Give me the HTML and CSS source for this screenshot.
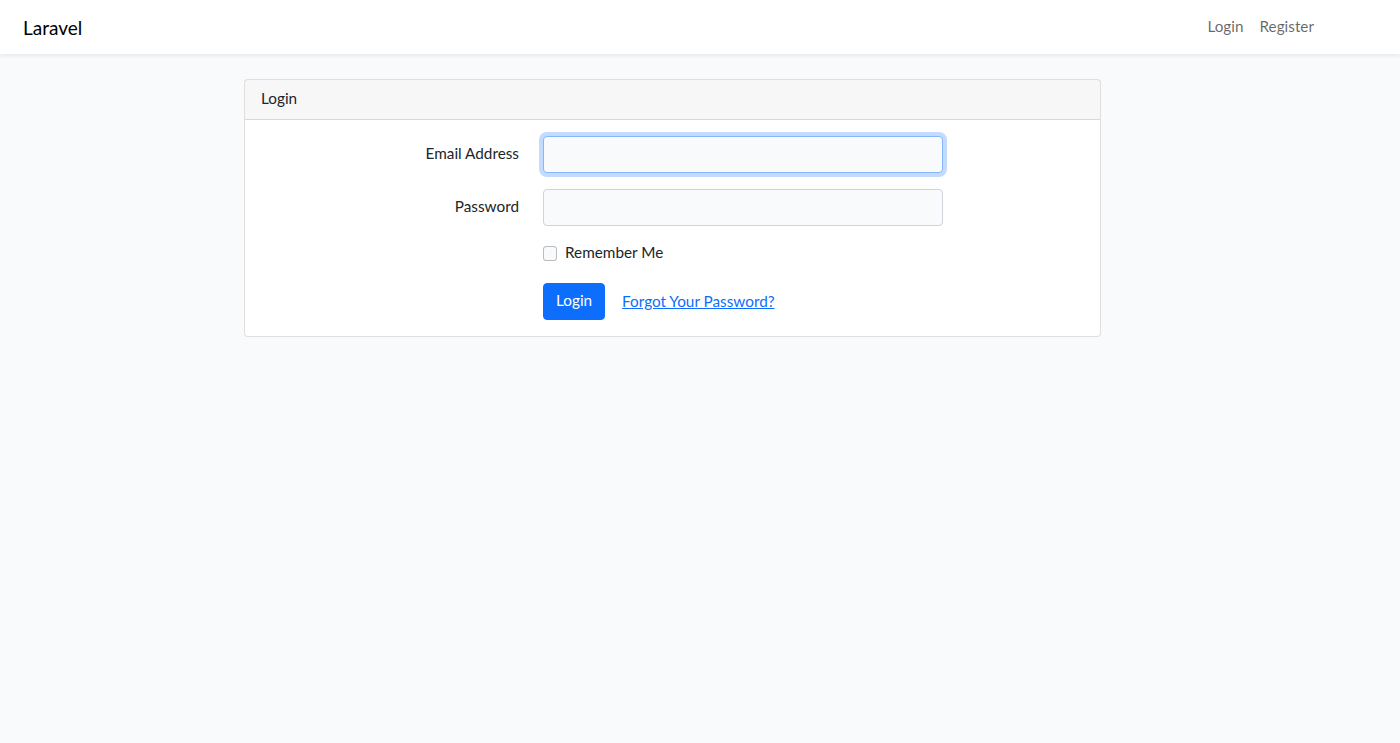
FILE: index.html
```html
<!DOCTYPE html>
<html lang="en">
<head>
<meta charset="utf-8">
<title>Laravel</title>
<link rel="stylesheet" href="styles.css">
</head>
<body>
<nav class="navbar">
  <a class="brand" href="#">Laravel</a>
  <ul class="nav-links">
    <li><a href="#">Login</a></li>
    <li><a href="#">Register</a></li>
  </ul>
</nav>
<main class="main">
  <div class="card">
    <div class="card-header">Login</div>
    <div class="card-body">
      <form class="form">
        <div class="row">
          <label class="col-label" for="email">Email Address</label>
          <div class="col-field"><input id="email" class="input input-focus" type="email"></div>
        </div>
        <div class="row">
          <label class="col-label" for="password">Password</label>
          <div class="col-field"><input id="password" class="input" type="password"></div>
        </div>
        <div class="row">
          <div class="col-label"></div>
          <div class="col-field">
            <div class="check">
              <span class="check-box"></span>
              <label class="check-label">Remember Me</label>
            </div>
          </div>
        </div>
        <div class="row row-last">
          <div class="col-label"></div>
          <div class="col-field actions">
            <button type="button" class="btn">Login</button>
            <a class="link" href="#">Forgot Your Password?</a>
          </div>
        </div>
      </form>
    </div>
  </div>
</main>
</body>
</html>
```

FILE: styles.css
```css
* { box-sizing: border-box; }
html, body { margin: 0; padding: 0; }
body {
  background: #f8fafc;
  font-family: "Lato", "Noto Sans", sans-serif;
  font-size: 15.3px;
  line-height: 23px;
  color: #212529;
  min-height: 743px;
}
.navbar {
  height: 54px;
  background: #fff;
  box-shadow: 0 2px 4px rgba(0,0,0,0.075);
  display: flex;
  align-items: center;
  justify-content: space-between;
  padding: 0 86px 0 23px;
}
.brand {
  font-size: 19px;
  color: #000;
  text-decoration: none;
  line-height: 1;
}
.nav-links {
  list-style: none;
  margin: 0;
  padding: 0 0 2px;
  display: flex;
  gap: 16px;
}
.nav-links a {
  color: rgba(0,0,0,0.6);
  text-decoration: none;
  font-size: 15.3px;
}
.main {
  padding: 25px 0 24px 244px;
}
.card {
  width: 857px;
  background: #fff;
  border: 1px solid rgba(0,0,0,0.125);
  border-radius: 4px;
}
.card-header {
  background: rgba(0,0,0,0.03);
  border-bottom: 1px solid rgba(0,0,0,0.125);
  padding: 7px 16px 9px;
  line-height: 23px;
  color: #212529;
}
.card-body { padding: 16px 16px 16px 4px; }
.row {
  display: flex;
  margin-bottom: 16px;
}
.row-last { margin-bottom: 0; }
.col-label {
  width: 282px;
  padding: 6px 12px 8px;
  text-align: right;
  line-height: 23px;
}
.col-field { padding: 0 12px; }
.input {
  display: block;
  width: 400px;
  height: 37px;
  padding: 6px 12px;
  font: inherit;
  background: #f8fafc;
  border: 1px solid #ced4da;
  border-radius: 4px;
  outline: none;
}
.input-focus {
  border-color: #86b7fe;
  box-shadow: 0 0 0 4px rgba(13,110,253,0.25);
}
.check {
  display: flex;
  align-items: center;
  height: 23px;
  margin-bottom: 2px;
}
.check-box {
  width: 14.4px;
  height: 14.4px;
  border: 1px solid rgba(0,0,0,0.25);
  border-radius: 3.6px;
  background: #f8fafc;
  margin-right: 7.6px;
}
.check-label { line-height: 21px; padding-bottom: 2px; }
.actions {
  display: flex;
  align-items: center;
}
.btn {
  font: inherit;
  height: 37px;
  padding: 5px 12px 7px;
  color: #fff;
  background: #0d6efd;
  border: 1px solid #0d6efd;
  border-radius: 4px;
}
.link {
  color: #0d6efd;
  text-decoration: underline;
  margin-left: 17px;
}
```
